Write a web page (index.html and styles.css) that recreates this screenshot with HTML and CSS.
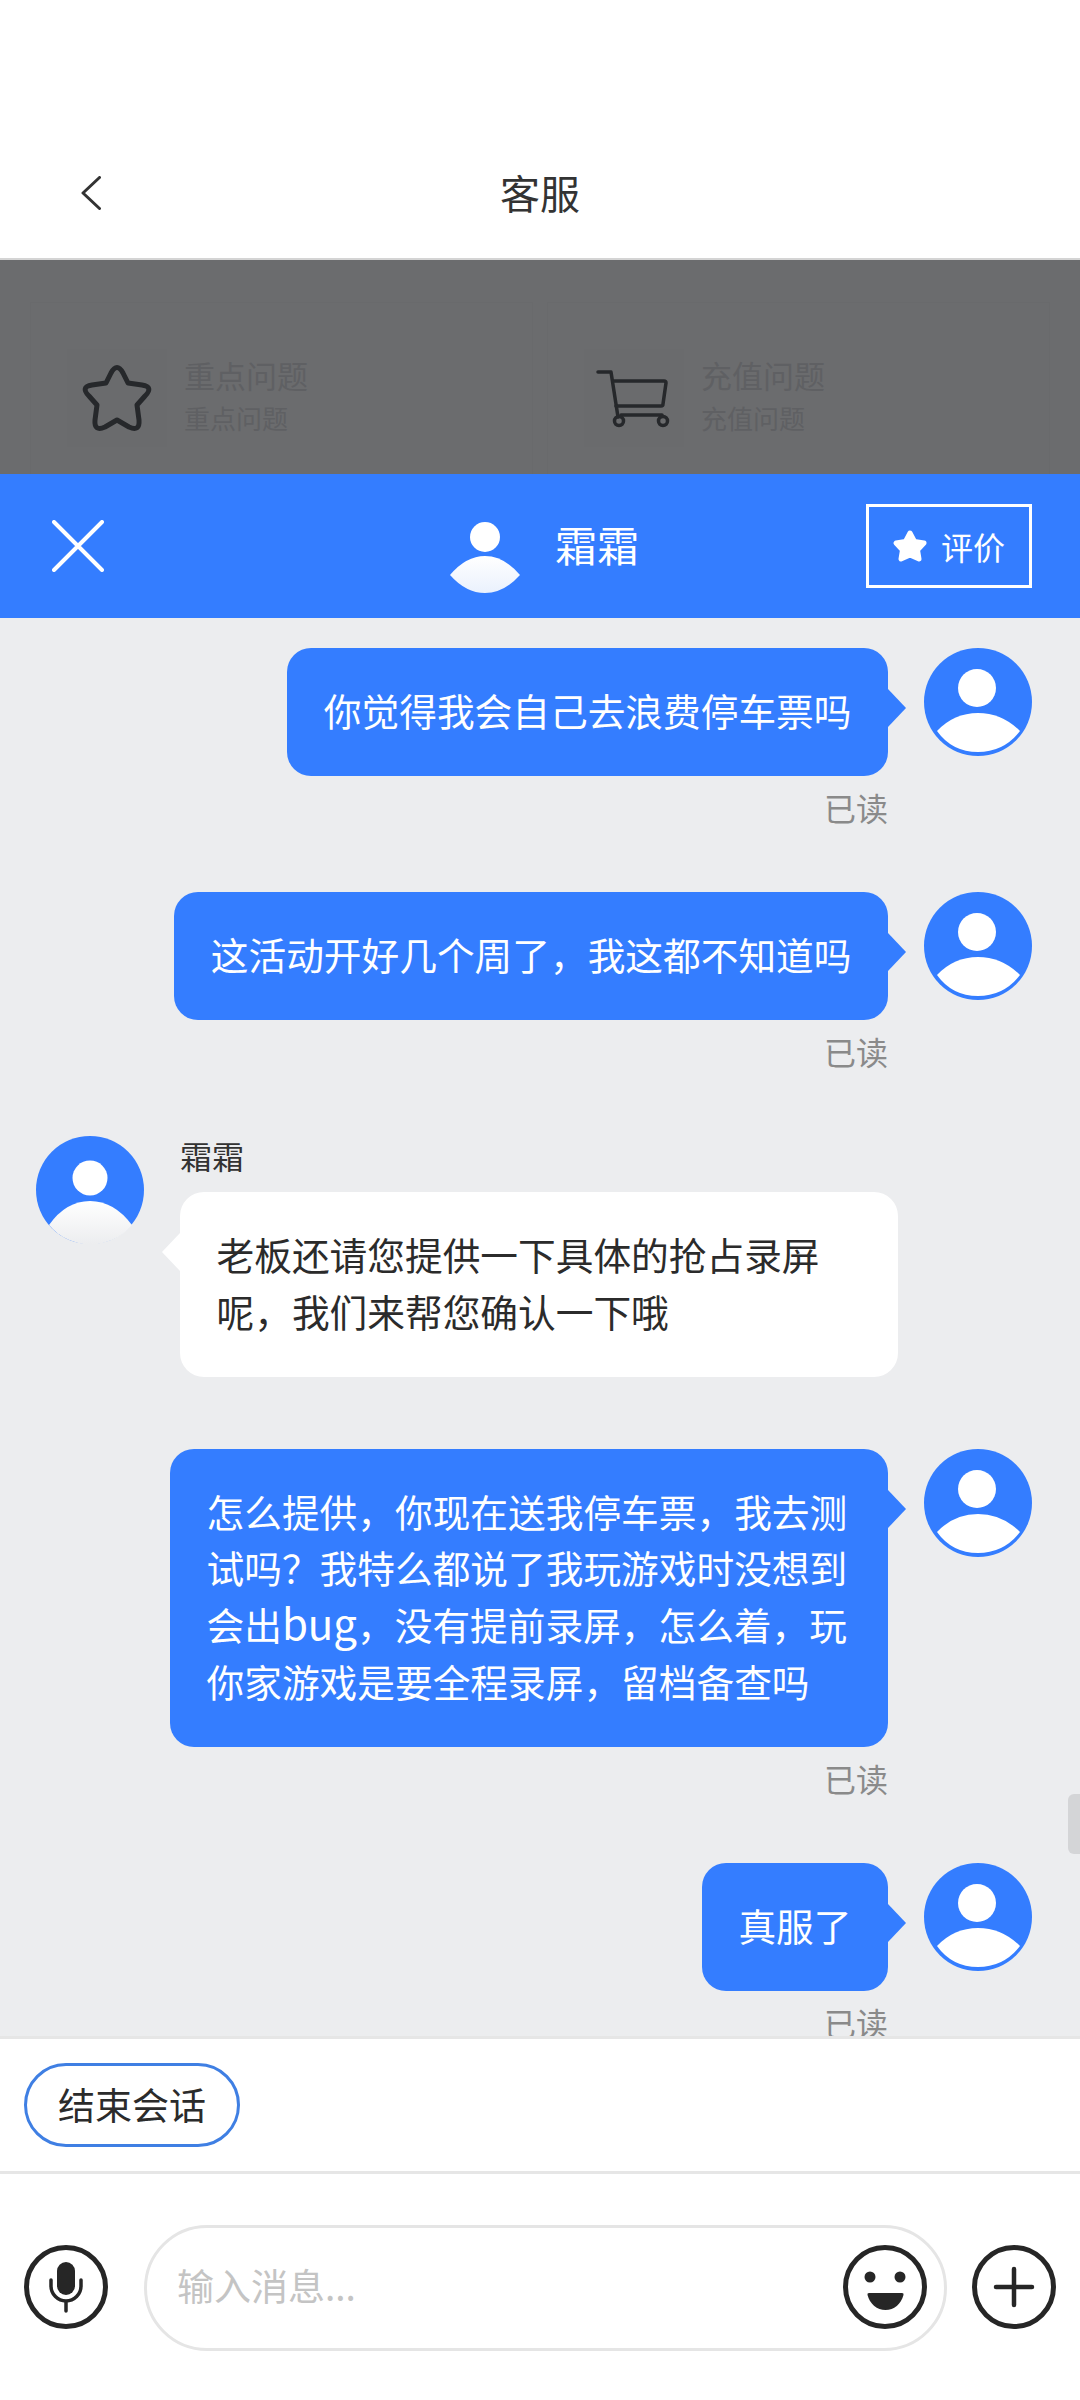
FILE: index.html
```html
<!DOCTYPE html>
<html>

<head>
    <title>客服</title>
    <link rel="stylesheet" href="styles.css">
</head>

<body>
    <!-- shared avatar drawings -->
    <svg class="defs" width="0" height="0">
        <defs>
            <linearGradient id="bodyFade" x1="0" y1="0" x2="0" y2="1">
                <stop offset="0" stop-color="#ffffff" />
                <stop offset="1" stop-color="#eaf1fd" />
            </linearGradient>
            <linearGradient id="agentFade" x1="0" y1="0" x2="0" y2="1">
                <stop offset="0" stop-color="#ffffff" />
                <stop offset="1" stop-color="#ecedef" />
            </linearGradient>
            <symbol id="avatarMe" viewBox="0 0 108 108">
                <circle cx="54" cy="54" r="54" fill="#347dff" />
                <circle cx="53" cy="40" r="19" fill="#fff" />
                <path d="M13 83Q30 65 54 65T96 83Q80 104 54 104T13 83Z" fill="#fff" />
            </symbol>
            <symbol id="avatarAgent" viewBox="0 0 108 108">
                <circle cx="54" cy="54" r="54" fill="#347dff" />
                <circle cx="54" cy="42" r="17.5" fill="#fff" />
                <path d="M13 89Q30 65 54 65T96 89A54 54 0 0 1 13 89Z" fill="url(#agentFade)" />
            </symbol>
        </defs>
    </svg>

    <div class="page">
        <header class="topbar">
            <svg class="back" width="20" height="34" viewBox="0 0 20 34">
                <path d="M18.5 1.5L2 17l16.5 15.5" />
            </svg>
            <h1>客服</h1>
        </header>

        <section class="dimmed">
            <div class="card">
                <div class="card-icon">
                    <svg width="100" height="98" viewBox="0 0 100 98">
                        <path class="line-icon"
                            d="M44 24Q50 13 56 24L61 34L75 36Q87 38 78 47L70 56L72 71Q73 83 62 78L50 71L38 78Q27 83 28 71L30 56L22 47Q13 38 25 36L39 34Z" />
                    </svg>
                </div>
                <div>
                    <div class="card-title">重点问题</div>
                    <div class="card-sub">重点问题</div>
                </div>
            </div>
            <div class="card">
                <div class="card-icon">
                    <svg width="100" height="98" viewBox="0 0 100 98">
                        <g class="line-icon thin">
                            <path d="M14 23H27L34 68" />
                            <path d="M29 32H80Q82 32 82 34L79 55Q79 57 77 57H32" />
                            <path d="M37 66H78" />
                            <circle cx="35" cy="72" r="4.5" />
                            <circle cx="79" cy="72" r="4.5" />
                        </g>
                    </svg>
                </div>
                <div>
                    <div class="card-title">充值问题</div>
                    <div class="card-sub">充值问题</div>
                </div>
            </div>
        </section>

        <section class="chat-head">
            <svg class="close" width="52" height="52" viewBox="0 0 52 52">
                <path d="M2 2L50 50M50 2L2 50" />
            </svg>
            <div class="agent">
                <svg width="70" height="72" viewBox="0 0 70 72">
                    <circle cx="35" cy="15" r="15" fill="#fff" />
                    <path d="M0 53Q16 34 35 34T70 53Q54 71 35 71T0 53Z" fill="url(#bodyFade)" />
                </svg>
                <span>霜霜</span>
            </div>
            <div class="rate">
                <svg width="36" height="34" viewBox="0 0 36 34">
                    <path d="M18 4L22.500 12.500L32 14L25.500 21L27 30L18 26L9 30L10.500 21L4 14L13.500 12.500Z" />
                </svg>
                <span>评价</span>
            </div>
        </section>

        <main class="chat">
            <div class="row row-me">
                <div class="msg">
                    <div class="bubble bubble-me">你觉得我会自己去浪费停车票吗</div>
                    <div class="read">已读</div>
                </div>
                <svg class="avatar"><use href="#avatarMe" /></svg>
            </div>

            <div class="row row-me">
                <div class="msg">
                    <div class="bubble bubble-me">这活动开好几个周了，我这都不知道吗</div>
                    <div class="read">已读</div>
                </div>
                <svg class="avatar"><use href="#avatarMe" /></svg>
            </div>

            <div class="row row-agent">
                <svg class="avatar"><use href="#avatarAgent" /></svg>
                <div class="msg-agent">
                    <div class="name">霜霜</div>
                    <div class="bubble bubble-agent">老板还请您提供一下具体的抢占录屏呢，我们来帮您确认一下哦</div>
                </div>
            </div>

            <div class="row row-me">
                <div class="msg">
                    <div class="bubble bubble-me">怎么提供，你现在送我停车票，我去测试吗？我特么都说了我玩游戏时没想到会出<span class="latin">bug</span>，没有提前录屏，怎么着，玩你家游戏是要全程录屏，留档备查吗</div>
                    <div class="read">已读</div>
                </div>
                <svg class="avatar"><use href="#avatarMe" /></svg>
            </div>

            <div class="row row-me">
                <div class="msg">
                    <div class="bubble bubble-me">真服了</div>
                    <div class="read">已读</div>
                </div>
                <svg class="avatar"><use href="#avatarMe" /></svg>
            </div>

            <div class="scrollbar"></div>
        </main>

        <div class="actions">
            <div class="pill">结束会话</div>
        </div>

        <footer class="composer">
            <svg class="round-icon" width="84" height="84" viewBox="0 0 84 84">
                <circle class="ring" cx="42" cy="42" r="39.500" />
                <rect class="solid" x="33" y="17" width="18" height="33" rx="9" />
                <path class="ring thin" d="M27 35V41A15 15 0 0 0 57 41V35M42 56V66" />
            </svg>
            <div class="input">
                <span class="placeholder">输入消息...</span>
                <svg class="round-icon" width="84" height="84" viewBox="0 0 84 84">
                    <circle class="ring" cx="42" cy="42" r="39.500" />
                    <circle class="solid" cx="27" cy="32" r="5.500" />
                    <circle class="solid" cx="57" cy="32" r="5.500" />
                    <path class="solid" d="M26 48H59Q61 48 60.500 50C58 59 51 65 42.500 65C34 65 27 59 24.500 50Q24 48 26 48Z" />
                </svg>
            </div>
            <svg class="round-icon" width="84" height="84" viewBox="0 0 84 84">
                <circle class="ring" cx="42" cy="42" r="39.500" />
                <path class="ring plus" d="M24 42H60M42 24V60" />
            </svg>
        </footer>
    </div>
</body>

</html>
```

FILE: styles.css
```css
* {
    box-sizing: border-box;
}

body {
    margin: 0;
    background-color: #fff;
    color: #2b2b2b;
    font-family: "Noto Sans CJK SC", "Noto Sans", sans-serif;
}

.defs {
    position: absolute;
}

.page {
    display: flex;
    flex-direction: column;
    width: 1080px;
    height: 2400px;
    overflow: hidden;
}

/* top title bar */
.topbar {
    display: grid;
    grid-template-columns: 1fr auto 1fr;
    align-items: center;
    height: 260px;
    padding: 128px 81px 2px;
    border-bottom: 2px solid #d4d4d4;
}

.topbar h1 {
    margin: 0;
    font-size: 40px;
    font-weight: 400;
    line-height: 50px;
    color: #333;
}

.back {
    margin-top: 2px;
}

.back path {
    fill: none;
    stroke: #333;
    stroke-width: 3;
    stroke-linecap: round;
    stroke-linejoin: round;
}

/* page behind the chat sheet, under the mask */
.dimmed {
    display: flex;
    gap: 14px;
    height: 214px;
    padding: 42px 30px 0;
    background-color: #6b6c6e;
    overflow: hidden;
}

.card {
    display: flex;
    flex: 1;
    align-items: flex-start;
    gap: 17px;
    height: 200px;
    padding: 46px 0 0 36px;
    border: 1px solid #696a6c;
    color: #5f6063;
}

.card-icon {
    width: 100px;
    height: 98px;
    background-color: #6a6b6d;
}

.line-icon {
    fill: none;
    stroke: #26282b;
    stroke-width: 5;
    stroke-linejoin: round;
    stroke-linecap: round;
}

.line-icon.thin {
    stroke-width: 3.5;
}

.card-title {
    font-size: 31px;
    line-height: 42px;
    margin-top: 5px;
}

.card-sub {
    font-size: 26px;
    line-height: 43px;
}

/* chat sheet header */
.chat-head {
    display: grid;
    grid-template-columns: 1fr auto 1fr;
    align-items: center;
    height: 144px;
    padding: 0 48px 0 52px;
    background-color: #347dff;
    color: #fff;
}

.close path {
    fill: none;
    stroke: #fff;
    stroke-width: 4;
    stroke-linecap: round;
}

.agent {
    display: flex;
    align-items: center;
    gap: 35px;
    margin-left: 5px;
    font-size: 42px;
}

.agent svg {
    margin-top: 24px;
}

.agent span {
    margin-bottom: 6px;
}

.rate {
    display: flex;
    align-items: center;
    justify-self: end;
    gap: 13px;
    width: 166px;
    height: 84px;
    padding-left: 23px;
    border: 3px solid #fff;
    font-size: 32px;
}

.rate path {
    fill: #fff;
    stroke: #fff;
    stroke-width: 5;
    stroke-linejoin: round;
}

/* messages */
.chat {
    position: relative;
    flex: 1;
    padding-top: 30px;
    background-color: #ecedef;
    overflow: hidden;
}

.row {
    display: flex;
    margin-bottom: 63px;
}

.row-me {
    justify-content: flex-end;
    gap: 36px;
    padding-right: 48px;
}

.row-agent {
    gap: 36px;
    margin-bottom: 72px;
    padding-left: 36px;
}

.avatar {
    flex: none;
    width: 108px;
    height: 108px;
}

.msg {
    display: flex;
    flex-direction: column;
    align-items: flex-end;
}

.bubble {
    position: relative;
    max-width: 718px;
    padding: 34px 36.5px 37.3px;
    border-radius: 24px;
    font-size: 37.7px;
    line-height: 56.7px;
}

.bubble::after {
    content: "";
    position: absolute;
    top: 41px;
    border-style: solid;
    border-width: 19px 0 19px 18px;
    border-color: transparent transparent transparent #347dff;
}

.bubble-me {
    background-color: #347dff;
    color: #fff;
}

.bubble-me::after {
    left: 100%;
}

.bubble-agent {
    width: 718px;
    background-color: #fff;
}

.bubble-agent::after {
    right: 100%;
    border-width: 19px 18px 19px 0;
    border-color: transparent #fff transparent transparent;
}

.latin {
    font-size: 42px;
    line-height: 1;
}

.read {
    margin-top: 9px;
    font-size: 32px;
    line-height: 44px;
    color: #8a8a8a;
}

.name {
    height: 56px;
    font-size: 32px;
    line-height: 38px;
    color: #333;
}

.scrollbar {
    position: absolute;
    top: 1176px;
    right: 0;
    width: 12px;
    height: 60px;
    border-radius: 6px 0 0 6px;
    background-color: #d4d5d7;
}

/* bottom bars */
.actions {
    height: 138px;
    padding: 24px 24px 0;
    border-top: 3px solid #e6e6e6;
    border-bottom: 3px solid #e6e6e6;
}

.pill {
    width: 216px;
    height: 84px;
    border: 3px solid #3f7fe3;
    border-radius: 42px;
    font-size: 37px;
    line-height: 76px;
    text-align: center;
}

.composer {
    display: flex;
    align-items: center;
    height: 226px;
    padding-left: 24px;
}

.input {
    display: flex;
    align-items: center;
    justify-content: space-between;
    width: 803px;
    height: 126px;
    margin: 2px 25px 0 36px;
    padding: 0 17px 0 30px;
    border: 3px solid #e5e5e5;
    border-radius: 63px;
}

.placeholder {
    margin-bottom: 7px;
    font-size: 37px;
    color: #c4c4c4;
}

.input .round-icon {
    margin-top: -2px;
}

.round-icon {
    flex: none;
}

.ring {
    fill: none;
    stroke: #262626;
    stroke-width: 5;
}

.ring.thin {
    stroke-width: 3.5;
    stroke-linecap: round;
}

.ring.plus {
    stroke-width: 4.5;
    stroke-linecap: round;
}

.solid {
    fill: #262626;
}
```
